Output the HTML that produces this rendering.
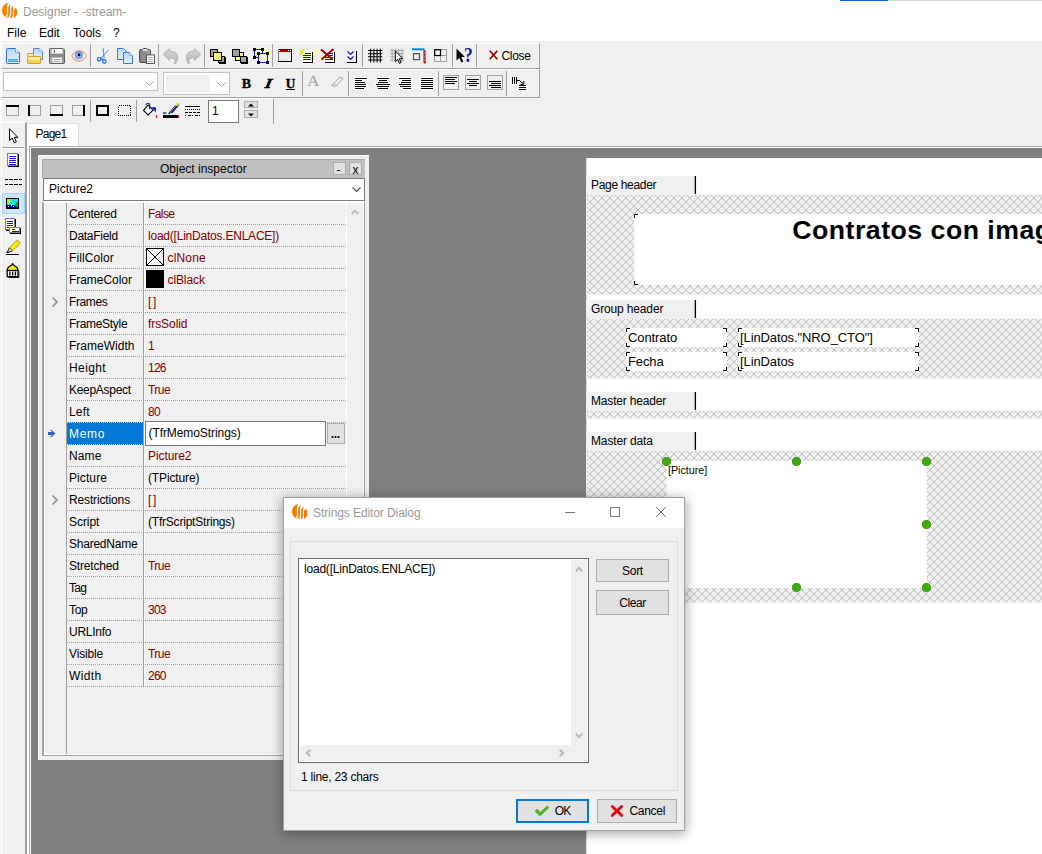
<!DOCTYPE html>
<html>
<head>
<meta charset="utf-8">
<title>Designer</title>
<style>
*{box-sizing:border-box;margin:0;padding:0}
html,body{width:1042px;height:854px;overflow:hidden;background:#f0f0f0}
body{position:relative;font-family:"Liberation Sans",sans-serif;font-size:12px;color:#000}
.a{position:absolute}
.t{position:absolute;white-space:nowrap;line-height:14px}
svg{position:absolute;overflow:visible}
.m{color:#800000}
.dot{position:absolute;height:1px;background-image:linear-gradient(90deg,#a0a0a0 1px,transparent 1px);background-size:2px 1px}
.btn{position:absolute;background:#e1e1e1;border:1px solid #adadad}
.sep{position:absolute;width:2px;border-left:1px solid #a0a0a0;border-right:1px solid #fff}
</style>
</head>
<body>
<svg width="0" height="0" style="left:0;top:0"><defs>
<pattern id="hatch" width="8" height="8" patternUnits="userSpaceOnUse" patternTransform="translate(2,6)"><rect width="8" height="8" fill="#f0f0f0"/><g fill="#c0c0c0" shape-rendering="crispEdges"><rect x="0" y="0" width="1" height="1"/><rect x="0" y="7" width="1" height="1"/><rect x="1" y="1" width="1" height="1"/><rect x="1" y="6" width="1" height="1"/><rect x="2" y="2" width="1" height="1"/><rect x="2" y="5" width="1" height="1"/><rect x="3" y="3" width="1" height="1"/><rect x="3" y="4" width="1" height="1"/><rect x="4" y="4" width="1" height="1"/><rect x="4" y="3" width="1" height="1"/><rect x="5" y="5" width="1" height="1"/><rect x="5" y="2" width="1" height="1"/><rect x="6" y="6" width="1" height="1"/><rect x="6" y="1" width="1" height="1"/><rect x="7" y="7" width="1" height="1"/><rect x="7" y="0" width="1" height="1"/></g></pattern>
</defs></svg>
<!-- TITLE BAR + MENU (white) -->
<div class="a" id="topwhite" style="left:0;top:0;width:1042px;height:41px;background:#fff"></div>
<div class="a" style="left:840px;top:0;width:48px;height:1px;background:#0a64d8"></div>
<div class="a" style="left:888px;top:0;width:154px;height:1px;background:#d9d9d9"></div>
<svg width="0" height="0" style="left:0;top:0"><defs>
<g id="logo" fill="#ff7a00">
<path d="M8.900 2.800C5.200 3.200 2 6.600 2 10.500C2 13.600 3.500 16 5.600 17.300L6.900 14.600V6.200C7 4.600 7.900 3.500 8.900 2.800Z"/>
<path d="M10.900 4C9.100 4.900 8.200 6.400 8.200 8.100V13C8.200 15 7.800 16.600 6.700 17.800L7.700 18.100C9.400 16.900 10 15.100 10 13.100V7.600C10 6.100 10.300 5 10.900 4Z"/>
<path d="M14.100 6C12.200 6.200 11.200 7.400 11.200 9V14C11.200 15.800 10.800 17 9.900 17.800L11.500 18.100C12.600 17.100 13 15.800 13 14.100V8.600C13 7.200 13.300 6.600 14.100 6Z"/>
<path d="M15.600 8C14.600 8.700 14 9.500 14 10.600V18.100C15.600 17.300 17.300 15 17.300 12.200C17.300 10.300 16.600 8.900 15.600 8Z"/>
</g></defs></svg>
<svg style="left:0;top:0" width="20" height="20" viewBox="0 0 20 20"><use href="#logo"/></svg>
<div class="t" style="left:23px;top:5px;color:#999">Designer - -stream-</div>
<div class="t" style="left:7px;top:26px">File</div>
<div class="t" style="left:39px;top:26px">Edit</div>
<div class="t" style="left:73px;top:26px">Tools</div>
<div class="t" style="left:113px;top:26px">?</div>
<!-- TOOLBARS -->
<div class="a" id="tb1" style="left:1px;top:43px;width:539px;height:26px;border-right:1px solid #a0a0a0;border-bottom:1px solid #a0a0a0;border-top:1px solid #fff;border-left:1px solid #fff"></div>
<div class="a" id="tb2" style="left:1px;top:69px;width:539px;height:29px;border-right:1px solid #a0a0a0;border-bottom:1px solid #a0a0a0;border-top:1px solid #fff;border-left:1px solid #fff"></div>
<div class="a" id="tb3" style="left:1px;top:98px;width:273px;height:26px;border-right:1px solid #a0a0a0;border-top:1px solid #fff;border-left:1px solid #fff"></div>
<!-- separators tb1 -->
<div class="a" style="left:90px;top:44px;width:1px;height:23px;background:#a0a0a0"></div>
<div class="a" style="left:158px;top:44px;width:1px;height:23px;background:#a0a0a0"></div>
<div class="a" style="left:204px;top:44px;width:1px;height:23px;background:#a0a0a0"></div>
<div class="a" style="left:272px;top:44px;width:1px;height:23px;background:#a0a0a0"></div>
<div class="a" style="left:362px;top:44px;width:1px;height:23px;background:#a0a0a0"></div>
<div class="a" style="left:452px;top:44px;width:1px;height:23px;background:#a0a0a0"></div>
<div class="a" style="left:476px;top:44px;width:1px;height:23px;background:#a0a0a0"></div>
<!-- separators tb2 -->
<div class="a" style="left:302px;top:71px;width:1px;height:25px;background:#a0a0a0"></div>
<div class="a" style="left:348px;top:71px;width:1px;height:25px;background:#a0a0a0"></div>
<div class="a" style="left:438px;top:71px;width:1px;height:25px;background:#a0a0a0"></div>
<div class="a" style="left:506px;top:71px;width:1px;height:25px;background:#a0a0a0"></div>
<!-- separators tb3 -->
<div class="a" style="left:90px;top:100px;width:1px;height:22px;background:#a0a0a0"></div>
<div class="a" style="left:136px;top:100px;width:1px;height:22px;background:#a0a0a0"></div>

<!-- TB1 ICONS -->
<!-- new -->
<svg style="left:5px;top:48px" width="16" height="16" viewBox="0 0 16 16">
<defs><linearGradient id="gdoc" x1="0" y1="0" x2="0" y2="1"><stop offset="0" stop-color="#bcd6f7"/><stop offset="1" stop-color="#e4effc"/></linearGradient></defs>
<path d="M2.500 0.500H10.500L14.500 4.500V14.500Q14.500 15.500 13.500 15.500H2.500Q1.500 15.500 1.500 14.500V1.500Q1.500 0.500 2.500 0.500Z" fill="url(#gdoc)" stroke="#2b6fd2"/>
<path d="M10.500 0.500V4.500H14.500" fill="#eef5fe" stroke="#5a95e0" stroke-width="0.8"/>
<rect x="3" y="11" width="10" height="3" fill="#3da2f3"/><rect x="3" y="12" width="10" height="1" fill="#86c8fa"/>
</svg>
<!-- open -->
<svg style="left:27px;top:48px" width="16" height="16" viewBox="0 0 16 16">
<path d="M6.500 0.500H12.300L15.500 3.700V11.500H6.500Z" fill="url(#gdoc)" stroke="#4a84de"/>
<path d="M12.300 0.500V3.700H15.500" fill="#f2f7fe" stroke="#78a6ea" stroke-width="0.700"/>
<path d="M0.500 6Q0.500 5.500 1 5.500H6.500V8.500H0.500Z" fill="#fbeaa6" stroke="#dd9a32"/>
<path d="M0.500 15V9.500L3.500 8.500H13.500V15Q13.500 15.500 13 15.500H1Q0.500 15.500 0.500 15Z" fill="#fbe590" stroke="#dd9a32"/>
<rect x="1.200" y="12.200" width="11.600" height="2.700" fill="#f5d050"/><rect x="1.200" y="9.400" width="11.600" height="1" fill="#fdf3c4"/>
</svg>
<!-- save -->
<svg style="left:49px;top:48px" width="16" height="16" viewBox="0 0 16 16">
<path d="M1.200 0.500H14L15.500 2V14.800Q15.500 15.500 14.800 15.500H1.200Q0.500 15.500 0.500 14.800V1.200Q0.500 0.500 1.200 0.500Z" fill="#979797" stroke="#555" stroke-width="0.900"/>
<rect x="1.400" y="1.400" width="1" height="13.200" fill="#c4c4c4"/>
<rect x="2.600" y="1" width="11" height="4.600" fill="#f6f6f6"/><rect x="4.900" y="1.800" width="1.100" height="2.900" fill="#555"/><rect x="8" y="1.200" width="5" height="2" fill="#fff"/>
<rect x="1" y="6" width="14" height="3" fill="#8a8a8a"/>
<rect x="3.400" y="9.600" width="9.400" height="5.200" fill="#fdfdfd"/><rect x="4.600" y="11" width="7" height="1" fill="#a4a4a4"/><rect x="4.600" y="12.800" width="7" height="1" fill="#a4a4a4"/>
</svg>
<!-- eye -->
<svg style="left:71px;top:48px" width="16" height="16" viewBox="0 0 16 16">
<path d="M0 7.800Q3.500 2.100 8.300 2.100Q13.300 2.100 16.100 7.800Q13 13.900 8 13.900Q3 13.900 0 7.800Z" fill="#efb48a"/>
<path d="M1.700 7.800Q4.600 3.800 8.300 3.800Q12 3.800 14.600 7.800Q12 12 8 12Q4.300 12 1.700 7.800Z" fill="#fff"/>
<circle cx="7.900" cy="7.200" r="4.100" fill="#6a94e6"/><circle cx="7.900" cy="7.600" r="2.900" fill="#8db2f4"/>
<circle cx="8.100" cy="6.900" r="1.350" fill="#000"/>
</svg>
<!-- cut -->
<svg style="left:95px;top:48px" width="16" height="16" viewBox="0 0 16 16" fill="none" stroke="#2f7fd6">
<path d="M8.200 0.300L9.200 10.500M13.400 2L6.500 9.800" stroke-width="0.900"/>
<circle cx="4.200" cy="11.300" r="1.700" stroke-width="1.400"/><circle cx="9.300" cy="13.500" r="1.700" stroke-width="1.400"/>
<path d="M5.500 10.300L8.500 12" stroke-width="1.600"/>
</svg>
<!-- copy -->
<svg style="left:117px;top:48px" width="16" height="16" viewBox="0 0 16 16">
<path d="M0.500 0.500H6.500L9.500 3.500V11.500H0.500Z" fill="url(#gdoc)" stroke="#3878d8"/>
<path d="M6.500 4.500H12.500L15.500 7.500V15.500H6.500Z" fill="url(#gdoc)" stroke="#3878d8"/>
<path d="M12.500 4.500V7.500H15.500" fill="#eef5fe" stroke="#6a9ee6" stroke-width="0.8"/>
</svg>
<!-- paste -->
<svg style="left:139px;top:48px" width="16" height="16" viewBox="0 0 16 16">
<defs><linearGradient id="gps" x1="0" y1="0" x2="1" y2="0"><stop offset="0" stop-color="#7e7e7e"/><stop offset="1" stop-color="#a2a2a2"/></linearGradient></defs>
<path d="M1.500 1.500H3.500Q3.800 0.500 4.800 0.500H7.400Q8.400 0.500 8.700 1.500H10.500Q11.500 1.500 11.500 2.500V13.500Q11.500 14.500 10.500 14.500H1.500Q0.500 14.500 0.500 13.500V2.500Q0.500 1.500 1.500 1.500Z" fill="url(#gps)" stroke="#4c4c4c"/>
<rect x="3.800" y="1.200" width="4.600" height="1.800" fill="#e8e8e8"/>
<rect x="7.500" y="6.900" width="8" height="8.600" fill="#fcfcfc" stroke="#444" stroke-width="0.900"/>
<path d="M9 9.500H14M9 11.500H14M9 13.500H14" stroke="#b0b0b0"/>
</svg>
<!-- undo -->
<svg style="left:163px;top:48px" width="16" height="16" viewBox="0 0 16 16">
<defs><linearGradient id="gun" x1="0" y1="0" x2="0" y2="1"><stop offset="0" stop-color="#d6d6d6"/><stop offset="1" stop-color="#b4b4b4"/></linearGradient></defs>
<path d="M0.200 6.400L6.600 0.600V3C11 3 14.600 5 14.600 9C14.600 12 13.500 14 12.600 15.500L11.200 15.500C12 14 12.200 13 12 12C11.500 10.500 9.500 9.800 6.600 9.800V12.600Z" fill="url(#gun)" stroke="#ababab" stroke-width="0.800"/>
</svg>
<!-- redo -->
<svg style="left:185px;top:48px" width="16" height="16" viewBox="0 0 16 16">
<path d="M15.800 6.400L9.400 0.600V3C5 3 1.400 5 1.400 9C1.400 12 2.500 14 3.400 15.500L4.800 15.500C4 14 3.800 13 4 12C4.500 10.500 6.500 9.800 9.400 9.800V12.600Z" fill="url(#gun)" stroke="#ababab" stroke-width="0.800"/>
</svg>
<!-- bring to front -->
<svg style="left:210px;top:49px" width="16" height="15" viewBox="0 0 16 15" shape-rendering="crispEdges">
<rect x="0.500" y="0.500" width="7" height="7" fill="#a0a0a0" stroke="#000"/>
<rect x="8.500" y="7.500" width="6" height="6" fill="#a0a0a0" stroke="#000"/>
<rect x="3.500" y="3.500" width="8" height="8" fill="#f6f47a" stroke="#000"/>
<rect x="9" y="14" width="6" height="1" fill="#000"/><rect x="15" y="8" width="1" height="7" fill="#000"/>
</svg>
<!-- send to back -->
<svg style="left:232px;top:49px" width="16" height="15" viewBox="0 0 16 15" shape-rendering="crispEdges">
<rect x="3.500" y="3.500" width="8" height="8" fill="#f6f47a" stroke="#000"/>
<rect x="0.500" y="0.500" width="7" height="7" fill="#a0a0a0" stroke="#000"/>
<rect x="8.500" y="7.500" width="6" height="6" fill="#a0a0a0" stroke="#000"/>
<rect x="9" y="14" width="6" height="1" fill="#000"/><rect x="15" y="8" width="1" height="7" fill="#000"/>
</svg>
<!-- select all -->
<svg style="left:253px;top:48px" width="16" height="16" viewBox="0 0 16 16" shape-rendering="crispEdges">
<rect x="1.500" y="1.500" width="8" height="8" fill="none" stroke="#1414c8"/>
<rect x="5.500" y="5.500" width="9" height="9" fill="#f0f0f0" stroke="#1414c8"/>
<g fill="#000"><rect x="0" y="0" width="3" height="3"/><rect x="8" y="0" width="3" height="3"/><rect x="0" y="8" width="3" height="3"/>
<rect x="4" y="4" width="3" height="3"/><rect x="13" y="4" width="3" height="3"/><rect x="4" y="13" width="3" height="3"/><rect x="13" y="13" width="3" height="3"/></g>
</svg>
<!-- page options -->
<svg style="left:277px;top:49px" width="16" height="14" viewBox="0 0 16 14" shape-rendering="crispEdges">
<rect x="1" y="0" width="14" height="12" fill="#ecece8"/>
<rect x="1" y="0" width="14" height="3" fill="#b00000"/><rect x="1" y="0" width="14" height="1" fill="#700000"/><rect x="2" y="1" width="1" height="1" fill="#fff"/><rect x="11" y="1" width="1" height="1" fill="#fff"/><rect x="13" y="1" width="1" height="1" fill="#fff"/>
<rect x="1" y="0" width="1" height="12" fill="#808080"/>
<rect x="14" y="0" width="1" height="13" fill="#000"/><rect x="1" y="12" width="14" height="1" fill="#000"/>
</svg>
<!-- add page -->
<svg style="left:298px;top:48px" width="16" height="16" viewBox="0 0 16 16" shape-rendering="crispEdges">
<rect x="4" y="3" width="10" height="11" fill="#fff"/><rect x="14" y="4" width="1" height="11" fill="#000"/><rect x="5" y="14" width="10" height="1" fill="#000"/>
<g fill="#1414c8"><rect x="7" y="5" width="6" height="1"/><rect x="5" y="7" width="8" height="1"/><rect x="5" y="9" width="8" height="1"/><rect x="5" y="11" width="8" height="1"/></g>
<g stroke-width="0.900" shape-rendering="auto" fill="none"><path d="M1.500 7.500L4 4M6.500 1L4 4" stroke="#a0a0a0"/><path d="M1 1L7 7M4 0V8M0.500 4H8" stroke="#ece400"/></g>
</svg>
<!-- delete page -->
<svg style="left:320px;top:48px" width="16" height="16" viewBox="0 0 16 16">
<g shape-rendering="crispEdges"><rect x="4" y="3" width="10" height="11" fill="#fff"/><rect x="14" y="4" width="1" height="11" fill="#000"/><rect x="5" y="14" width="10" height="1" fill="#000"/>
<g fill="#1414c8"><rect x="5" y="5" width="8" height="1"/><rect x="5" y="7" width="8" height="1"/><rect x="5" y="9" width="8" height="1"/><rect x="5" y="11" width="8" height="1"/></g></g>
<path d="M1 1.500L12.500 11.500M13.500 1L1.500 11.500" stroke="#b00000" stroke-width="2" fill="none"/>
</svg>
<!-- chevrons -->
<svg style="left:346px;top:50px" width="12" height="14" viewBox="0 0 12 14" fill="none">
<path d="M1.500 1.500L4.500 4.500L7.500 1.500M1.500 6.500L4.500 9.500L7.500 6.500" stroke="#1414c8" stroke-width="1.200"/>
<path d="M10.500 0.500V12.500H0.500" stroke="#000" shape-rendering="crispEdges"/>
</svg>
<!-- grid -->
<svg style="left:368px;top:48px" width="15" height="16" viewBox="0 0 15 16" fill="none" stroke="#000" stroke-width="1.050">
<path d="M2.600 0.700V14.600M5.900 0.700V14.600M9.100 0.700V14.600M12.300 0.700V14.600M0 2.500H14.300M0 5.700H14.300M0 8.800H14.300M0 12H14.300"/>
</svg>
<!-- grid align -->
<svg style="left:390px;top:48px" width="16" height="16" viewBox="0 0 16 16">
<path d="M2.200 0.700V14M5.500 0.700V14M8.700 0.700V14M11.900 0.700V14M0 2.500H14M0 5.700H14M0 8.800H14M0 12H14" fill="none" stroke="#ababab" stroke-width="1.100"/>
<path d="M5.300 2.900V13.500L7.700 11.300L9.400 15.300L11 14.600L9.300 10.700H12.800Z" fill="#fff" stroke="#000" stroke-width="1"/>
</svg>
<!-- fit grid -->
<svg style="left:412px;top:48px" width="16" height="16" viewBox="0 0 16 16">
<rect x="0" y="0.200" width="12.600" height="2.300" fill="#28b4e0"/><rect x="11" y="2.500" width="3" height="12.200" fill="#28b4e0"/>
<path d="M0.500 1.400H12" stroke="#4848c0" stroke-width="1.100" stroke-dasharray="1.600 1"/>
<rect x="1.500" y="5.600" width="6" height="6" fill="#f0f0f0" stroke="#505050" stroke-width="1.200"/>
<path d="M12.600 2V15.800" stroke="#f01010" stroke-width="1.100" stroke-dasharray="2.600 1"/>
<path d="M11.600 13.200L12.600 16L14.600 13.200Z" fill="#f01010"/>
</svg>
<!-- four squares -->
<svg style="left:434px;top:49px" width="13" height="13" viewBox="0 0 13 13" shape-rendering="crispEdges">
<rect x="0.500" y="0.500" width="12" height="12" fill="#f0f0f0" stroke="#a0a0a0"/><path d="M6.500 0V13M0 6.500H13" stroke="#a0a0a0"/>
<rect x="0.700" y="0.700" width="5.800" height="5.800" fill="#fafafa" stroke="#000" stroke-width="1.250" shape-rendering="auto"/>
</svg>
<!-- help -->
<svg style="left:456px;top:48px" width="17" height="16" viewBox="0 0 17 16">
<path d="M0.500 0.500V12.500L3.300 9.800L5.300 14.500L7.300 13.600L5.300 9H9Z" fill="#000"/>
<text x="9.200" y="14.200" font-family="Liberation Serif,serif" font-weight="bold" font-size="20" fill="#1414a0" transform="scale(0.88 1)">?</text>
</svg>
<!-- close -->
<svg style="left:489px;top:50px" width="9" height="10" viewBox="0 0 9 10"><path d="M0.700 0.700L8.300 9.300M8.300 0.700L0.700 9.300" stroke="#a00000" stroke-width="1.700" fill="none"/></svg>
<div class="t" style="left:501.500px;top:49px;letter-spacing:-0.3px">Close</div>
<!-- TB2 -->
<div class="a" style="left:3px;top:72px;width:155px;height:19px;background:#fff;border:1px solid #c2c2c2"></div>
<svg style="left:144.500px;top:80.500px" width="9" height="5.400" viewBox="0 0 10 6"><path d="M0.500 0.500L5 5L9.500 0.500" fill="none" stroke="#9a9a9a" stroke-width="1"/></svg>
<div class="a" style="left:163px;top:72px;width:67px;height:23px;background:#fff;border:1px solid #c2c2c2"></div>
<div class="a" style="left:166px;top:75px;width:44px;height:17px;background:#f0f0f0"></div>
<svg style="left:216.500px;top:81.500px" width="9" height="5.400" viewBox="0 0 10 6"><path d="M0.500 0.500L5 5L9.500 0.500" fill="none" stroke="#9a9a9a" stroke-width="1"/></svg>
<svg style="left:236px;top:72px" width="66" height="22" viewBox="236 72 66 22" font-family="Liberation Serif,serif" font-weight="bold" font-size="13.700" fill="#000" stroke="#000" stroke-width="0.400" text-rendering="geometricPrecision">
<text transform="translate(241.800 87.800) scale(1.020 1)">B</text>
<text transform="translate(264.300 87.800) scale(1.300 1) skewX(-8)" font-style="italic">I</text>
<text transform="translate(285.800 87.800) scale(0.960 1)">U</text>
<rect x="286" y="89" width="9" height="1" stroke="none" shape-rendering="crispEdges"/>
</svg>
<svg style="left:306px;top:72px" width="16" height="16" viewBox="0 0 16 16"><text x="1" y="13.800" font-family="Liberation Serif,serif" font-size="15.500" fill="#a0a0a0" transform="scale(1.12 1)" text-rendering="geometricPrecision">A</text></svg>
<!-- highlighter disabled -->
<svg style="left:331px;top:76px" width="13" height="11" viewBox="0 0 13 11" fill="none" stroke="#a8a8a8" stroke-width="1">
<path d="M0.500 9.500L9 1L12 2.500L4.500 10.500Z"/><path d="M2.500 7.500L5.500 9.500"/>
</svg>
<!-- align icons -->
<svg style="left:0;top:0" width="540" height="100" viewBox="0 0 540 100" shape-rendering="crispEdges">
<g fill="#fff"><rect x="354" y="77" width="14" height="3"/><rect x="354" y="79" width="9" height="3"/><rect x="354" y="81" width="12" height="3"/><rect x="354" y="83" width="13" height="3"/><rect x="354" y="85" width="13" height="3"/><rect x="354" y="87" width="11" height="3"/><rect x="376" y="77" width="14" height="3"/><rect x="378" y="79" width="10" height="3"/><rect x="377" y="81" width="12" height="3"/><rect x="375" y="83" width="16" height="3"/><rect x="376" y="85" width="14" height="3"/><rect x="377" y="87" width="12" height="3"/><rect x="398" y="77" width="14" height="3"/><rect x="401" y="79" width="11" height="3"/><rect x="400" y="81" width="12" height="3"/><rect x="398" y="83" width="14" height="3"/><rect x="399" y="85" width="13" height="3"/><rect x="402" y="87" width="10" height="3"/><rect x="420" y="77" width="14" height="3"/><rect x="420" y="79" width="14" height="3"/><rect x="420" y="81" width="14" height="3"/><rect x="420" y="83" width="14" height="3"/><rect x="420" y="85" width="14" height="3"/><rect x="420" y="87" width="14" height="3"/></g><g fill="#000"><rect x="355" y="78" width="12" height="1"/><rect x="355" y="80" width="7" height="1"/><rect x="355" y="82" width="10" height="1"/><rect x="355" y="84" width="11" height="1"/><rect x="355" y="86" width="11" height="1"/><rect x="355" y="88" width="9" height="1"/><rect x="377" y="78" width="12" height="1"/><rect x="379" y="80" width="8" height="1"/><rect x="378" y="82" width="10" height="1"/><rect x="376" y="84" width="14" height="1"/><rect x="377" y="86" width="12" height="1"/><rect x="378" y="88" width="10" height="1"/><rect x="399" y="78" width="12" height="1"/><rect x="402" y="80" width="9" height="1"/><rect x="401" y="82" width="10" height="1"/><rect x="399" y="84" width="12" height="1"/><rect x="400" y="86" width="11" height="1"/><rect x="403" y="88" width="8" height="1"/><rect x="421" y="78" width="12" height="1"/><rect x="421" y="80" width="12" height="1"/><rect x="421" y="82" width="12" height="1"/><rect x="421" y="84" width="12" height="1"/><rect x="421" y="86" width="12" height="1"/><rect x="421" y="88" width="12" height="1"/></g>
</svg>
<!-- valign icons -->
<svg style="left:0;top:0" width="540" height="100" viewBox="0 0 540 100" shape-rendering="crispEdges">
<g fill="none" stroke="#a0a0a0"><rect x="443.500" y="75.500" width="15" height="14"/><rect x="465.500" y="75.500" width="15" height="14"/><rect x="487.500" y="75.500" width="15" height="14"/></g>
<g fill="#000"><rect x="445" y="77" width="12" height="1"/><rect x="445" y="79" width="10" height="1"/><rect x="445" y="81" width="12" height="1"/><rect x="445" y="83" width="10" height="1"/><rect x="467" y="79" width="12" height="1"/><rect x="469" y="81" width="8" height="1"/><rect x="467" y="83" width="12" height="1"/><rect x="469" y="85" width="8" height="1"/><rect x="489" y="81" width="12" height="1"/><rect x="491" y="83" width="10" height="1"/><rect x="489" y="85" width="12" height="1"/><rect x="491" y="87" width="10" height="1"/></g>
</svg>
<!-- rotate -->
<svg style="left:0;top:0" width="540" height="100" viewBox="0 0 540 100">
<g shape-rendering="crispEdges" fill="#000"><rect x="512" y="77" width="1" height="7"/><rect x="514" y="77" width="1" height="7"/><rect x="516" y="77" width="1" height="7"/>
<rect x="519" y="85" width="7" height="1"/><rect x="519" y="87" width="7" height="1"/><rect x="519" y="89" width="7" height="1"/></g>
<path d="M517 80.500H519.500L523 83.500M520.500 84.300H523.800V81" fill="none" stroke="#000" stroke-width="1"/>
</svg>

<!-- TB3 -->
<svg style="left:6px;top:105px" width="130" height="11" viewBox="0 0 130 11" shape-rendering="crispEdges">
<g fill="none" stroke="#a0a0a0"><rect x="0.500" y="0.500" width="12" height="10"/><rect x="22.500" y="0.500" width="12" height="10"/><rect x="44.500" y="0.500" width="12" height="10"/><rect x="66.500" y="0.500" width="12" height="10"/></g>
<g fill="#000"><rect x="0" y="0" width="13" height="2"/><rect x="22" y="0" width="2" height="11"/><rect x="44" y="9" width="13" height="2"/><rect x="77" y="0" width="2" height="11"/></g>
<rect x="91" y="1" width="11" height="9" fill="none" stroke="#000" stroke-width="2"/>
<rect x="112.500" y="0.500" width="12" height="10" fill="none" stroke="#000" stroke-width="1" stroke-dasharray="1 1"/>
</svg>
<!-- paint bucket -->
<svg style="left:143px;top:103px" width="15" height="15" viewBox="0 0 15 15">
<path d="M0.600 7.400L5.100 2L10.200 7L5.100 12Z" fill="#fff" stroke="#000" stroke-width="1.100"/>
<path d="M2.500 10L7.500 10" stroke="#c8c8c8" stroke-width="0" fill="none"/>
<path d="M3.100 2.300V1.500Q3.300 0.300 4.900 0.300Q6.700 0.300 6.700 1.800V6.300" fill="none" stroke="#1414c8" stroke-width="1.100"/>
<path d="M8.800 3.900L12.300 4.300Q13.200 5 13 7L12.300 9.800Q11.500 6.500 8.800 3.900Z" fill="#1010b8"/>
<rect x="13" y="12" width="1.100" height="3" fill="#f01010"/>
</svg>
<!-- pen colour -->
<svg style="left:163px;top:102px" width="17" height="16" viewBox="0 0 17 16">
<rect x="0" y="13" width="15" height="3" fill="#000"/><rect x="15" y="13" width="1" height="3" fill="#f01010"/>
<rect x="0" y="10.400" width="3" height="1.300" fill="#1010b8"/><rect x="3" y="10.400" width="0.900" height="1.300" fill="#20c0d0"/>
<path d="M5.400 11.700L12.200 3.600L15.500 0.900L15.600 3.800L9.700 10.800Z" fill="#0c0ca8"/>
<path d="M5.600 11.500L12.100 3.800L13 4.600L7.300 11.200Z" fill="#fff" stroke="#000" stroke-width="0.700"/>
<path d="M12.200 3.600L13 1.300L15.700 0.700L15 3.400L13.500 4.300Z" fill="#f4ec10"/>
</svg>
<!-- line style -->
<svg style="left:185px;top:106px" width="16" height="11" viewBox="0 0 16 11" shape-rendering="crispEdges" fill="#000">
<rect x="0" y="0" width="15" height="1"/>
<g><rect x="0" y="3" width="1" height="1"/><rect x="2" y="3" width="1" height="1"/><rect x="4" y="3" width="1" height="1"/><rect x="6" y="3" width="1" height="1"/><rect x="8" y="3" width="1" height="1"/><rect x="10" y="3" width="1" height="1"/><rect x="12" y="3" width="1" height="1"/><rect x="14" y="3" width="1" height="1"/></g>
<rect x="0" y="6" width="3" height="1"/><rect x="4" y="6" width="3" height="1"/><rect x="8" y="6" width="3" height="1"/><rect x="12" y="6" width="3" height="1"/>
<rect x="0" y="9" width="1" height="1"/><rect x="3" y="9" width="3" height="1"/><rect x="7" y="9" width="1" height="1"/><rect x="10" y="9" width="3" height="1"/><rect x="14" y="9" width="1" height="1"/>
</svg>
<div class="a" style="left:208px;top:100px;width:31px;height:23px;background:#fff;border:1px solid #7a7a7a"></div>
<div class="t" style="left:212px;top:104px">1</div>
<div class="btn" style="left:244px;top:101px;width:14px;height:7px"></div>
<div class="btn" style="left:244px;top:110px;width:14px;height:8px"></div>
<svg style="left:248px;top:102.500px" width="6" height="14" viewBox="0 0 6 14" fill="#000"><path d="M0 3.500L3 0.400L6 3.500Z"/><path d="M0 10.500L3 13.600L6 10.500Z"/></svg>
<!-- LEFT PALETTE -->
<div class="a" id="pal" style="left:1px;top:122px;width:26px;height:732px;border-right:2px solid #a0a0a0;border-left:1px solid #fff;border-top:1px solid #fff"></div>
<div class="a" style="left:0;top:0;width:1px;height:122px;background:#fff"></div>
<div class="a" style="left:2px;top:147px;width:22px;height:2px;border-top:1px solid #a0a0a0;border-bottom:1px solid #fff"></div>
<!-- arrow -->
<svg style="left:8px;top:128px" width="11" height="16" viewBox="0 0 11 16"><path d="M1.500 0.800V12.500L4.200 10L6.300 14.800L8.300 13.900L6.200 9.300H9.800Z" fill="#fff" stroke="#000" stroke-width="1"/></svg>
<!-- memo icon -->
<svg style="left:7px;top:153px" width="12" height="14" viewBox="0 0 12 14" shape-rendering="crispEdges">
<rect x="0.500" y="0.500" width="10" height="12" fill="#fff" stroke="#808080"/><rect x="11" y="1" width="1" height="13" fill="#000"/><rect x="1" y="13" width="11" height="1" fill="#000"/>
<g fill="#1414c8"><rect x="2" y="3" width="7" height="1"/><rect x="2" y="5" width="7" height="1"/><rect x="2" y="7" width="7" height="1"/><rect x="2" y="9" width="7" height="1"/><rect x="2" y="11" width="7" height="1"/></g>
</svg>
<!-- band icon -->
<svg style="left:5px;top:179px" width="17" height="6" viewBox="0 0 17 6" shape-rendering="crispEdges" fill="#000">
<rect x="0" y="0" width="3" height="1"/><rect x="4" y="0" width="4" height="1"/><rect x="9" y="0" width="4" height="1"/><rect x="14" y="0" width="3" height="1"/>
<rect x="0" y="5" width="3" height="1"/><rect x="4" y="5" width="4" height="1"/><rect x="9" y="5" width="4" height="1"/><rect x="14" y="5" width="3" height="1"/>
</svg>
<!-- selected: picture -->
<div class="a" style="left:2px;top:193px;width:23px;height:21px;background:#cce4f7;border:1px solid #a6d2f4"></div>
<svg style="left:6px;top:198px" width="14" height="11" viewBox="0 0 14 11" shape-rendering="crispEdges">
<rect x="0" y="0" width="13" height="11" fill="#000"/><rect x="1" y="1" width="11" height="6" fill="#00e8f0"/><rect x="1" y="7" width="11" height="3" fill="#0000b8"/>
<path d="M12 3L8 7.500L12 9.500Z" fill="#00a020" shape-rendering="auto"/>
<path d="M3 1V6M1 3.500H5.500M1.500 1.500L4.500 5.500M4.500 1.500L1.500 5.500" stroke="#f0f000" stroke-width="1" shape-rendering="auto"/>
<rect x="2" y="8" width="1" height="1" fill="#f0f000"/><rect x="5" y="7" width="1" height="1" fill="#fff"/><rect x="7" y="8" width="1" height="1" fill="#fff"/>
</svg>
<!-- subreport -->
<svg style="left:5px;top:218px" width="16" height="16" viewBox="0 0 16 16" shape-rendering="crispEdges">
<rect x="0.500" y="0.500" width="9" height="11" fill="#fff" stroke="#808080"/><rect x="10" y="1" width="1" height="12" fill="#000"/><rect x="1" y="12" width="10" height="1" fill="#000"/>
<g fill="#1414c8"><rect x="2" y="3" width="6" height="1"/><rect x="2" y="5" width="6" height="1"/><rect x="2" y="7" width="6" height="1"/><rect x="2" y="9" width="3" height="1"/></g>
<rect x="4.500" y="9.500" width="10" height="5" fill="#fff" stroke="#808080"/><rect x="15" y="10" width="1" height="6" fill="#000"/><rect x="5" y="15" width="11" height="1" fill="#000"/>
<rect x="7" y="11" width="3" height="1" fill="#1414c8"/><rect x="7" y="13" width="7" height="1" fill="#1414c8"/>
</svg>
<!-- draw line -->
<svg style="left:6px;top:240px" width="15" height="16" viewBox="0 0 15 16">
<path d="M0 14.500H13" stroke="#000" stroke-width="1" shape-rendering="crispEdges"/>
<path d="M1 12.800L3.500 7.800L6.500 10.800Z" fill="#fff" stroke="#000" stroke-width="1"/>
<path d="M3.500 7.800L9.800 1.200Q11.500 -0.200 13.200 1.500Q14.700 3.200 13.200 4.700L6.500 10.800Z" fill="#f4ec10" stroke="#9a9200" stroke-width="0.800"/>
<path d="M1 12.800L2.200 11.600" stroke="#000" stroke-width="1.500"/>
</svg>
<!-- cross band / bucket -->
<svg style="left:6px;top:263px" width="14" height="15" viewBox="0 0 14 15">
<path d="M1.200 7.500Q1.200 4.500 4 3L6.500 1.500L9 3Q12 4.500 12 7.500Z" fill="#f4ec10" stroke="#000" stroke-width="1.100"/>
<rect x="5.800" y="0.200" width="1.600" height="1.400" fill="#000"/>
<rect x="1.200" y="7.500" width="10.800" height="6.200" fill="#fff" stroke="#000" stroke-width="1.300"/>
<rect x="3.200" y="8.600" width="1.300" height="4" fill="#000"/><rect x="6" y="8.600" width="1.300" height="4" fill="#000"/><rect x="8.800" y="8.600" width="1.300" height="4" fill="#000"/>
<path d="M12.900 8.500V14.500H2.500" stroke="#000" stroke-width="0.900" fill="none"/>
</svg>
<!-- TAB -->
<div class="a" id="tab" style="left:27px;top:123px;width:52px;height:24px;background:#fff;border-right:1px solid #dadada;border-top:1px solid #e4e4e4"></div>
<div class="t" style="left:35.500px;top:127px;letter-spacing:-0.75px">Page1</div>
<!-- WORKSPACE -->
<div class="a" style="left:27px;top:146px;width:2px;height:708px;background:#fff"></div>
<div class="a" id="ws" style="left:29px;top:146px;width:1013px;height:708px;background:#808080;border-left:1px solid #a5a8b0;border-top:1px solid #a5a8b0"></div>
<div class="a" style="left:30px;top:147px;width:1012px;height:707px;border-left:1px solid #fff;border-top:1px solid #fff"></div>
<!-- REPORT PAGE -->
<div class="a" id="page" style="left:586px;top:158px;width:456px;height:696px;background:#fff"></div>
<svg style="left:586px;top:158px" width="456" height="696" viewBox="586 158 456 696">
<rect x="586" y="158" width="1" height="696" fill="#d6d6d6"/>
<g fill="#f0f0f0"><rect x="586" y="194" width="456" height="101"/><rect x="586" y="318" width="456" height="61"/><rect x="586" y="410" width="456" height="9"/><rect x="586" y="450" width="456" height="153"/></g>
<rect x="587" y="195" width="455" height="99" fill="url(#hatch)"/>
<rect x="587" y="319" width="455" height="59" fill="url(#hatch)"/>
<rect x="587" y="411" width="455" height="7" fill="url(#hatch)"/>
<rect x="587" y="451" width="455" height="151" fill="url(#hatch)"/>
<!-- memo boxes -->
<rect x="634" y="214" width="420" height="71" fill="#fff"/>
<rect x="626" y="328" width="101" height="19" fill="#fff"/>
<rect x="626" y="352" width="101" height="19" fill="#fff"/>
<rect x="738" y="328" width="181" height="19" fill="#fff"/>
<rect x="738" y="352" width="181" height="19" fill="#fff"/>
<rect x="666.500" y="461" width="260.500" height="127" fill="#fff"/>
<!-- corner marks -->
<g fill="none" stroke="#000" stroke-width="1">
<path d="M634.5 218V214.5H638M634.5 281V284.5H638"/>
<path d="M626.5 332V328.5H630M626.5 343V346.5H630M723 328.5H726.5V332M723 346.5H726.5V343"/>
<path d="M626.5 356V352.5H630M626.5 367V370.5H630M723 352.5H726.5V356M723 370.5H726.5V367"/>
<path d="M738.5 332V328.5H742M738.5 343V346.5H742M915 328.5H918.5V332M915 346.5H918.5V343"/>
<path d="M738.5 356V352.5H742M738.5 367V370.5H742M915 352.5H918.5V356M915 370.5H918.5V367"/>
</g>
<!-- band labels -->
<g fill="#f0f0f0">
<rect x="586" y="176" width="109" height="18"/><rect x="586" y="300" width="109" height="18"/><rect x="586" y="392" width="109" height="18"/><rect x="586" y="432" width="109" height="18"/>
</g>
<g fill="#000">
<rect x="694.700" y="176" width="1.350" height="18"/><rect x="694.700" y="300" width="1.350" height="18"/><rect x="694.700" y="392" width="1.350" height="18"/><rect x="694.700" y="432" width="1.350" height="18"/>
</g>
<!-- handles -->
<g fill="#3eab0a" stroke="#35900f" stroke-width="0.900">
<circle cx="666.500" cy="461.500" r="4.100"/><circle cx="796.500" cy="461.500" r="4.100"/><circle cx="926.500" cy="461.500" r="4.100"/>
<circle cx="926.500" cy="524.500" r="4.100"/><circle cx="796.500" cy="587.500" r="4.100"/><circle cx="926.500" cy="587.500" r="4.100"/>
</g>
</svg>
<div class="t" style="left:591px;top:177.5px;letter-spacing:-0.32px">Page header</div>
<div class="t" style="left:591px;top:301.5px;letter-spacing:-0.15px">Group header</div>
<div class="t" style="left:591px;top:393.5px;letter-spacing:-0.17px">Master header</div>
<div class="t" style="left:591px;top:433.5px;letter-spacing:-0.14px">Master data</div>
<div class="t" style="left:792.300px;top:214px;font-size:26.67px;line-height:32px;font-weight:bold;letter-spacing:0.5px">Contratos con imagenes</div>
<div class="t" style="left:628px;top:330px;font-size:13px;line-height:16px;letter-spacing:-0.1px">Contrato</div>
<div class="t" style="left:628px;top:354px;font-size:13px;line-height:16px;letter-spacing:-0.1px">Fecha</div>
<div class="t" style="left:740px;top:330px;font-size:13px;line-height:16px;letter-spacing:-0.1px">[LinDatos."NRO_CTO"]</div>
<div class="t" style="left:740px;top:354px;font-size:13px;line-height:16px;letter-spacing:-0.1px">[LinDatos</div>
<div class="t" style="left:668px;top:464px;font-size:10.67px;line-height:13px">[Picture]</div>
<!-- OBJECT INSPECTOR -->
<div class="a" id="oi" style="left:38px;top:155px;width:331px;height:605px;background:#f0f0f0;border-left:1px solid #fff;border-top:1px solid #fff"></div>
<div class="a" style="left:42px;top:159px;width:323px;height:19px;background:#c0c0c0;border-left:1px solid #a8a8a8;border-top:1px solid #a8a8a8"></div>
<div class="t" style="left:160px;top:162px">Object inspector</div>
<div class="btn" style="left:333px;top:162px;width:13px;height:13px"></div><div class="t" style="left:336.500px;top:163px">-</div>
<div class="btn" style="left:349px;top:162px;width:13px;height:13px"></div><div class="t" style="left:352.500px;top:163px">x</div>
<div class="a" style="left:43px;top:178px;width:322px;height:23px;background:#fff;border:1px solid #7a7a7a"></div>
<div class="t" style="left:49px;top:182px">Picture2</div>
<svg style="left:351.500px;top:187.300px" width="9" height="5.400" viewBox="0 0 10 6"><path d="M0.5 0.5L5 5L9.500 0.5" fill="none" stroke="#484848" stroke-width="1.250"/></svg>
<div class="a" style="left:42px;top:201px;width:323px;height:555px;border-top:2px solid #fff;border-right:1px solid #9a9ea6;border-bottom:1px solid #a0a0a0;border-left:2px solid #a6a6a6"></div>
<div class="a" style="left:44px;top:203px;width:320px;height:552px;border-left:1px solid #fff;border-right:1px solid #fff;border-bottom:1px solid #fff"></div>
<div class="a" style="left:66px;top:203px;width:1px;height:551px;background:#a0a0a0"></div>
<div class="a" style="left:143px;top:203px;width:1px;height:484px;background:#a0a0a0"></div>
<div class="a" style="left:144px;top:203px;width:1px;height:484px;background:#fff"></div>
<div class="a" style="left:346px;top:203px;width:1px;height:551px;background:#fff"></div>
<div class="dot" style="left:67px;top:224px;width:279px"></div>
<div class="t" style="left:69px;top:207px;letter-spacing:-0.21px">Centered</div>
<div class="t m" style="left:148px;top:207px;letter-spacing:-0.59px">False</div>
<div class="dot" style="left:67px;top:246px;width:279px"></div>
<div class="t" style="left:69px;top:229px;letter-spacing:-0.28px">DataField</div>
<div class="t m" style="left:148px;top:229px;letter-spacing:-0.22px">load([LinDatos.ENLACE])</div>
<div class="dot" style="left:67px;top:268px;width:279px"></div>
<div class="t" style="left:69px;top:251px;letter-spacing:0.09px">FillColor</div>
<svg style="left:146px;top:248px" width="18" height="18" viewBox="0 0 18 18"><rect x="0.5" y="0.5" width="17" height="17" fill="#fff" stroke="#000"/><path d="M0.5 0.5L17.5 17.5M17.5 0.5L0.5 17.5" stroke="#000" stroke-width="1"/></svg>
<div class="t m" style="left:167.5px;top:251px;letter-spacing:0.17px">clNone</div>
<div class="dot" style="left:67px;top:290px;width:279px"></div>
<div class="t" style="left:69px;top:273px;letter-spacing:-0.05px">FrameColor</div>
<div class="a" style="left:146px;top:270px;width:18px;height:18px;background:#000"></div>
<div class="t m" style="left:167.5px;top:273px;letter-spacing:-0.1px">clBlack</div>
<div class="dot" style="left:67px;top:312px;width:279px"></div>
<div class="t" style="left:69px;top:295px;letter-spacing:-0.39px">Frames</div>
<div class="t m" style="left:148px;top:295px;letter-spacing:1.63px">[]</div>
<svg style="left:52px;top:297px" width="6" height="10" viewBox="0 0 6 10"><path d="M0.5 0.5L5 5L0.5 9.5" fill="none" stroke="#8a8a8a" stroke-width="1.5"/></svg>
<div class="dot" style="left:67px;top:334px;width:279px"></div>
<div class="t" style="left:69px;top:317px;letter-spacing:-0.31px">FrameStyle</div>
<div class="t m" style="left:148px;top:317px;letter-spacing:-0.07px">frsSolid</div>
<div class="dot" style="left:67px;top:356px;width:279px"></div>
<div class="t" style="left:69px;top:339px;letter-spacing:0.01px">FrameWidth</div>
<div class="t m" style="left:148px;top:339px;letter-spacing:-1.17px">1</div>
<div class="dot" style="left:67px;top:378px;width:279px"></div>
<div class="t" style="left:69px;top:361px;letter-spacing:0.4px">Height</div>
<div class="t m" style="left:148px;top:361px;letter-spacing:-0.76px">126</div>
<div class="dot" style="left:67px;top:400px;width:279px"></div>
<div class="t" style="left:69px;top:383px;letter-spacing:-0.29px">KeepAspect</div>
<div class="t m" style="left:148px;top:383px;letter-spacing:-0.51px">True</div>
<div class="dot" style="left:67px;top:422px;width:279px"></div>
<div class="t" style="left:69px;top:405px;letter-spacing:0.16px">Left</div>
<div class="t m" style="left:148px;top:405px;letter-spacing:-0.55px">80</div>
<div class="a" style="left:67px;top:422px;width:76px;height:23px;background:#0078d7"></div>
<div class="dot" style="left:67px;top:422px;width:76px;background-image:linear-gradient(90deg,#d8d4cc 1px,transparent 1px)"></div>
<div class="dot" style="left:67px;top:444px;width:76px;background-image:linear-gradient(90deg,#d8d4cc 1px,transparent 1px)"></div>
<div class="t" style="left:69px;top:427px;color:#fff;letter-spacing:0.69px">Memo</div>
<div class="a" style="left:145px;top:421px;width:181px;height:25px;background:#fff;border:1px solid #7a7a7a"></div>
<div class="t" style="left:148.5px;top:426px;letter-spacing:-0.08px">(TfrMemoStrings)</div>
<div class="btn" style="left:327px;top:423px;width:18px;height:21px"></div><div class="t" style="left:330.800px;top:427px;font-weight:bold;letter-spacing:-0.300px">...</div>
<svg style="left:48px;top:429px" width="8" height="9" viewBox="0 0 8 9"><path d="M0 3H4.300L2.200 1.300L3.500 0.700L7.300 4.500L3.500 8.300L2.200 7.700L4.300 6H0Z" fill="#2c64c6"/></svg>
<div class="dot" style="left:67px;top:466px;width:279px"></div>
<div class="t" style="left:69px;top:449px;letter-spacing:0.13px">Name</div>
<div class="t m" style="left:148px;top:449px;letter-spacing:-0.09px">Picture2</div>
<div class="dot" style="left:67px;top:488px;width:279px"></div>
<div class="t" style="left:69px;top:471px;letter-spacing:0.09px">Picture</div>
<div class="t" style="left:148px;top:471px;letter-spacing:-0.14px">(TPicture)</div>
<div class="dot" style="left:67px;top:510px;width:279px"></div>
<div class="t" style="left:69px;top:493px;letter-spacing:-0.14px">Restrictions</div>
<div class="t m" style="left:148px;top:493px;letter-spacing:1.63px">[]</div>
<svg style="left:52px;top:495px" width="6" height="10" viewBox="0 0 6 10"><path d="M0.5 0.5L5 5L0.5 9.5" fill="none" stroke="#8a8a8a" stroke-width="1.5"/></svg>
<div class="dot" style="left:67px;top:532px;width:279px"></div>
<div class="t" style="left:69px;top:515px;letter-spacing:-0.06px">Script</div>
<div class="t" style="left:148px;top:515px;letter-spacing:-0.21px">(TfrScriptStrings)</div>
<div class="dot" style="left:67px;top:554px;width:279px"></div>
<div class="t" style="left:69px;top:537px;letter-spacing:-0.23px">SharedName</div>
<div class="dot" style="left:67px;top:576px;width:279px"></div>
<div class="t" style="left:69px;top:559px;letter-spacing:-0.18px">Stretched</div>
<div class="t m" style="left:148px;top:559px;letter-spacing:-0.51px">True</div>
<div class="dot" style="left:67px;top:598px;width:279px"></div>
<div class="t" style="left:69px;top:581px;letter-spacing:-0.67px">Tag</div>
<div class="dot" style="left:67px;top:620px;width:279px"></div>
<div class="t" style="left:69px;top:603px;letter-spacing:-0.32px">Top</div>
<div class="t m" style="left:148px;top:603px;letter-spacing:-0.76px">303</div>
<div class="dot" style="left:67px;top:642px;width:279px"></div>
<div class="t" style="left:69px;top:625px;letter-spacing:-0.27px">URLInfo</div>
<div class="dot" style="left:67px;top:664px;width:279px"></div>
<div class="t" style="left:69px;top:647px;letter-spacing:-0.16px">Visible</div>
<div class="t m" style="left:148px;top:647px;letter-spacing:-0.51px">True</div>
<div class="dot" style="left:67px;top:686px;width:279px"></div>
<div class="t" style="left:69px;top:669px;letter-spacing:0.38px">Width</div>
<div class="t m" style="left:148px;top:669px;letter-spacing:-0.76px">260</div>
<svg style="left:350.500px;top:209px" width="8" height="6" viewBox="0 0 8 6"><path d="M0.700 5L4 1.600L7.300 5" fill="none" stroke="#bcbcbc" stroke-width="2"/></svg>
<!-- DIALOG -->
<div class="a" id="dlg" style="left:283px;top:497px;width:402px;height:334px;background:#f0f0f0;border:1px solid #a0a0a0;box-shadow:0 2px 11px 1px rgba(0,0,0,.34)"></div>
<div class="a" style="left:284px;top:498px;width:400px;height:30px;background:#fff"></div>
<svg style="left:290px;top:501px" width="20" height="20" viewBox="0 0 20 20"><use href="#logo"/></svg>
<div class="t" style="left:313px;top:506px;color:#999;letter-spacing:-0.09px">Strings Editor Dialog</div>
<svg style="left:565px;top:507px" width="102" height="11" viewBox="0 0 102 11" fill="none" stroke="#767676" stroke-width="1">
<path d="M0 5.5H10"/><rect x="45.500" y="0.500" width="9" height="9"/><path d="M91 0L101 10M101 0L91 10"/>
</svg>
<!-- groupbox -->
<div class="a" style="left:290px;top:541px;width:388px;height:250px;border:1px solid #dcdcdc"></div>
<!-- memo -->
<div class="a" style="left:298px;top:558px;width:291px;height:205px;background:#fff;border:1px solid #696969"></div>
<div class="a" style="left:571px;top:560px;width:16px;height:201px;background:#f0f0f0"></div>
<div class="a" style="left:300px;top:745px;width:287px;height:16px;background:#f0f0f0"></div>
<svg style="left:574.500px;top:565.500px" width="8" height="6" viewBox="0 0 8 6"><path d="M0.800 5.300L4 1.800L7.200 5.300" fill="none" stroke="#b8b8b8" stroke-width="2"/></svg>
<svg style="left:574.500px;top:733px" width="8" height="6" viewBox="0 0 8 6"><path d="M0.800 0.700L4 4.200L7.200 0.700" fill="none" stroke="#b8b8b8" stroke-width="2"/></svg>
<svg style="left:305px;top:748.500px" width="6" height="8" viewBox="0 0 6 8"><path d="M5.300 0.800L1.800 4L5.300 7.200" fill="none" stroke="#b8b8b8" stroke-width="2"/></svg>
<svg style="left:559px;top:748.500px" width="6" height="8" viewBox="0 0 6 8"><path d="M0.700 0.800L4.200 4L0.700 7.200" fill="none" stroke="#b8b8b8" stroke-width="2"/></svg>
<div class="t" style="left:304px;top:562px;letter-spacing:-0.21px">load([LinDatos.ENLACE])</div>
<div class="t" style="left:301px;top:770px;letter-spacing:-0.24px">1 line, 23 chars</div>
<!-- buttons -->
<div class="btn" style="left:596px;top:559px;width:73px;height:23px"></div>
<div class="t" style="left:596px;top:564px;width:73px;text-align:center;letter-spacing:-0.3px">Sort</div>
<div class="btn" style="left:596px;top:590px;width:73px;height:25px"></div>
<div class="t" style="left:596px;top:596px;width:73px;text-align:center;letter-spacing:-0.42px">Clear</div>
<div class="btn" style="left:516px;top:799px;width:73px;height:24px;border:2px solid #0078d7"></div>
<div class="t" style="left:554.800px;top:803.500px;letter-spacing:-0.84px">OK</div>
<svg style="left:528px;top:800px" width="30" height="22" viewBox="0 0 30 22"><path d="M7.100 11.400L9.100 9.100L12.200 12.600L19.200 6L20.900 7.400L12.200 15.800Z" fill="#4db82a" stroke="#3a9a20" stroke-width="0.700" stroke-linejoin="round"/></svg>
<div class="btn" style="left:597px;top:799px;width:80px;height:24px"></div>
<div class="t" style="left:629.500px;top:803.500px;letter-spacing:-0.31px">Cancel</div>
<svg style="left:604px;top:800px" width="30" height="22" viewBox="0 0 30 22"><path d="M8.300 6.500L17.600 15.400M17.600 6.500L8.300 15.400" fill="none" stroke="#de0a16" stroke-width="2.900" stroke-linecap="round"/></svg>
</body>
</html>
